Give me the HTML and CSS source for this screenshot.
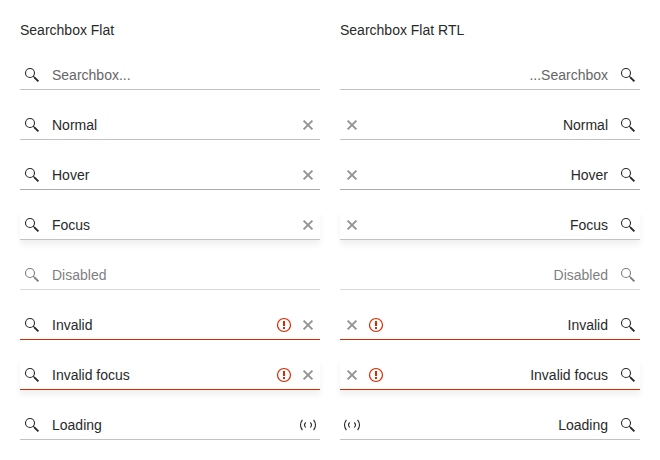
FILE: index.html
```html
<!DOCTYPE html>
<html lang="en">
<head>
<meta charset="utf-8">
<title>Searchbox Flat</title>
<link rel="stylesheet" href="styles.css">
</head>
<body>
<svg class="defs" width="0" height="0">
  <symbol id="search" viewBox="0 0 24 24"><circle cx="10" cy="10" r="4.5" fill="none" stroke="currentColor" stroke-width="1.1"/><path d="M13.2 13.2L15 15" fill="none" stroke="currentColor" stroke-width="1.1"/><path d="M14.6 14.6L18.4 18.4" fill="none" stroke="currentColor" stroke-width="2"/></symbol>
  <symbol id="clear" viewBox="0 0 24 24"><path d="M7.6 7.6L16.4 16.4M16.4 7.6L7.6 16.4" fill="none" stroke="currentColor" stroke-width="2"/></symbol>
  <symbol id="alert" viewBox="0 0 24 24"><circle cx="12" cy="12" r="6.5" fill="none" stroke="currentColor" stroke-width="1.2"/><path d="M11 8h2v5h-2zM11 14h2v2h-2z" fill="currentColor"/></symbol>
  <symbol id="loading" viewBox="0 0 24 24"><path d="M6.4 6.9Q2.6 12 6.4 17.1M17.6 6.9Q21.4 12 17.6 17.1M9.7 9.5Q7.3 12 9.7 14.5M14.3 9.5Q16.7 12 14.3 14.5" fill="none" stroke="currentColor" stroke-width="1.1"/></symbol>
</svg>
<main class="page">
  <section class="column">
    <h1 class="title">Searchbox Flat</h1>
    <div class="searchbox"><svg class="icon"><use href="#search"/></svg><span class="text placeholder">Searchbox...</span></div>
    <div class="searchbox"><svg class="icon"><use href="#search"/></svg><span class="text">Normal</span><svg class="icon clear"><use href="#clear"/></svg></div>
    <div class="searchbox hover"><svg class="icon"><use href="#search"/></svg><span class="text">Hover</span><svg class="icon clear"><use href="#clear"/></svg></div>
    <div class="searchbox focus"><svg class="icon"><use href="#search"/></svg><span class="text">Focus</span><svg class="icon clear"><use href="#clear"/></svg></div>
    <div class="searchbox disabled"><svg class="icon"><use href="#search"/></svg><span class="text">Disabled</span></div>
    <div class="searchbox invalid"><svg class="icon"><use href="#search"/></svg><span class="text">Invalid</span><svg class="icon alert"><use href="#alert"/></svg><svg class="icon clear"><use href="#clear"/></svg></div>
    <div class="searchbox invalid focus"><svg class="icon"><use href="#search"/></svg><span class="text">Invalid focus</span><svg class="icon alert"><use href="#alert"/></svg><svg class="icon clear"><use href="#clear"/></svg></div>
    <div class="searchbox"><svg class="icon"><use href="#search"/></svg><span class="text">Loading</span><svg class="icon"><use href="#loading"/></svg></div>
  </section>
  <section class="column">
    <h1 class="title">Searchbox Flat RTL</h1>
    <div class="searchbox" dir="rtl"><svg class="icon"><use href="#search"/></svg><span class="text placeholder">Searchbox...</span></div>
    <div class="searchbox" dir="rtl"><svg class="icon"><use href="#search"/></svg><span class="text">Normal</span><svg class="icon clear"><use href="#clear"/></svg></div>
    <div class="searchbox hover" dir="rtl"><svg class="icon"><use href="#search"/></svg><span class="text">Hover</span><svg class="icon clear"><use href="#clear"/></svg></div>
    <div class="searchbox focus" dir="rtl"><svg class="icon"><use href="#search"/></svg><span class="text">Focus</span><svg class="icon clear"><use href="#clear"/></svg></div>
    <div class="searchbox disabled" dir="rtl"><svg class="icon"><use href="#search"/></svg><span class="text">Disabled</span></div>
    <div class="searchbox invalid" dir="rtl"><svg class="icon"><use href="#search"/></svg><span class="text">Invalid</span><svg class="icon alert"><use href="#alert"/></svg><svg class="icon clear"><use href="#clear"/></svg></div>
    <div class="searchbox invalid focus" dir="rtl"><svg class="icon"><use href="#search"/></svg><span class="text">Invalid focus</span><svg class="icon alert"><use href="#alert"/></svg><svg class="icon clear"><use href="#clear"/></svg></div>
    <div class="searchbox" dir="rtl"><svg class="icon"><use href="#search"/></svg><span class="text">Loading</span><svg class="icon"><use href="#loading"/></svg></div>
  </section>
</main>
</body>
</html>
```
FILE: styles.css
```css
* {
  box-sizing: border-box;
}

body {
  margin: 0;
  background: #fff;
  color: #292929;
  font: 14px/20px "Liberation Sans", Arial, sans-serif;
}

.defs {
  position: absolute;
}

.page {
  display: flex;
  gap: 20px;
  padding: 20px;
}

.column {
  display: flex;
  flex-direction: column;
  gap: 20px;
  width: 300px;
}

.title {
  height: 20px;
  margin: 0;
  font-size: 14px;
  font-weight: 400;
}

.searchbox {
  display: flex;
  align-items: center;
  height: 30px;
  padding-top: 1px;
  border-bottom: 1px solid #c2c2c2;
}

.icon {
  width: 24px;
  height: 24px;
  flex: none;
}

.text {
  flex: 1;
  padding: 0 8px;
}

.placeholder {
  color: #666;
}

.clear {
  color: #949494;
}

.alert {
  color: #d92900;
}

.hover {
  border-color: #ababab;
}

.focus {
  box-shadow: 0 5px 6px rgba(0, 0, 0, 0.06);
}

.disabled {
  opacity: 0.6;
}

.invalid {
  border-color: #d92900;
}
```
